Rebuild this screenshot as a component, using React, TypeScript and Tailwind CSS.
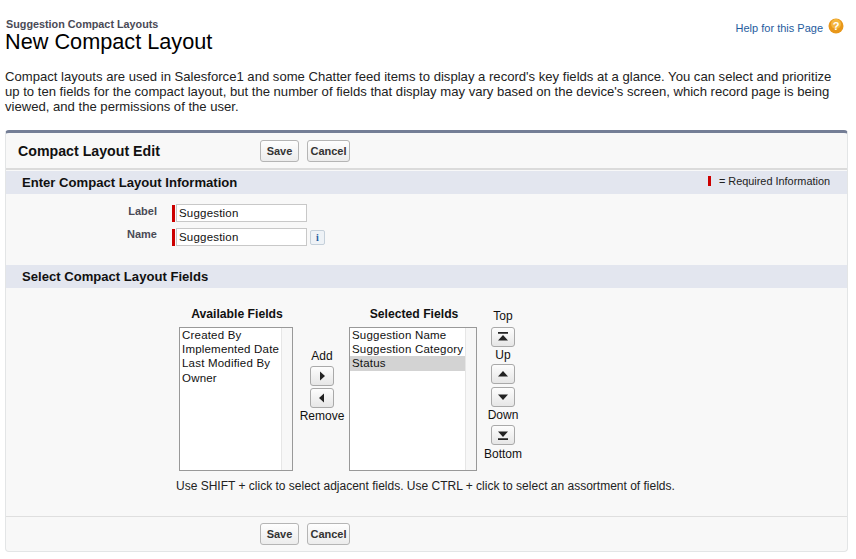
const FONT = "font-['Liberation_Sans',Arial,sans-serif]";

function PushButton({
  className = "",
  children,
}: {
  readonly className?: string;
  readonly children: React.ReactNode;
}): React.JSX.Element {
  return (
    <button
      type="button"
      className={`flex h-[20px] w-[24px] items-center justify-center rounded-[3px] border border-[#a9a9a9] bg-gradient-to-b from-[#fdfdfd] to-[#e6e6e6] ${className}`}
    >
      <svg width="14" height="12" viewBox="0 0 14 12" fill="#222">
        {children}
      </svg>
    </button>
  );
}

function ActionButtons(): React.JSX.Element {
  const cls =
    "h-[22px] rounded-[3px] border border-[#b5b5b5] bg-gradient-to-b from-[#fefefe] to-[#ececec] text-[11px] leading-none font-bold text-[#333]";
  return (
    <div className="flex gap-[8px]">
      <button type="button" className={`${cls} w-[39px]`}>
        Save
      </button>
      <button type="button" className={`${cls} w-[43px]`}>
        Cancel
      </button>
    </div>
  );
}

function SectionBar({
  title,
  trailing,
}: {
  readonly title: string;
  readonly trailing?: React.ReactNode;
}): React.JSX.Element {
  return (
    <div className="flex h-[23px] items-center justify-between bg-[#e3e6ef] pr-[17px] pl-[16px]">
      <h3 className="text-[13.1px] font-bold text-[#111]">{title}</h3>
      {trailing}
    </div>
  );
}

function FormRow({
  label,
  labelClass,
  trailing,
}: {
  readonly label: string;
  readonly labelClass: string;
  readonly trailing?: React.ReactNode;
}): React.JSX.Element {
  return (
    <div className="flex h-[24px] items-start">
      <label className={`w-[151px] text-right text-[11px] leading-[14px] font-bold text-[#4a4a56] ${labelClass}`}>
        {label}
      </label>
      <span className="mt-[1px] ml-[15px] h-[17px] w-[3px] bg-[#c00]" />
      <input
        readOnly
        value="Suggestion"
        className="ml-[1px] h-[18px] w-[131px] border border-[#c8c8c8] bg-white pl-[2px] text-[11.5px] tracking-[0.2px] text-[#111] outline-none"
      />
      {trailing}
    </div>
  );
}

function ListBox({
  title,
  items,
  selected,
  width,
}: {
  readonly title: string;
  readonly items: readonly string[];
  readonly selected?: string;
  readonly width: string;
}): React.JSX.Element {
  return (
    <div className={width}>
      <div className="h-[20px] pl-[2px] text-center text-[12.2px] leading-[14px] font-bold text-[#111]">{title}</div>
      <div className="flex h-[144px] border border-[#999] bg-white">
        <ul className="min-w-0 flex-1 text-[11.5px] leading-[14.2px] tracking-[0.2px] text-[#111]">
          {items.map((item) => (
            <li key={item} className={`pl-[2px] whitespace-nowrap ${item === selected ? "bg-[#d3d3d3]" : ""}`}>
              {item}
            </li>
          ))}
        </ul>
        <div className="w-[11px] border-l border-[#e6e6e6] bg-[#f7f7f7]" />
      </div>
    </div>
  );
}

function SmallLabel({
  className = "",
  children,
}: {
  readonly className?: string;
  readonly children: React.ReactNode;
}): React.JSX.Element {
  return (
    <div className={`text-center text-[12px] leading-[14px] whitespace-nowrap text-[#111] ${className}`}>
      {children}
    </div>
  );
}

export default function App(): React.JSX.Element {
  return (
    <div className={`${FONT} h-[559px] w-[856px] overflow-hidden bg-white px-[5px] pt-[18px] text-black`}>
      <div className="flex items-start justify-between pr-[7px]">
        <div>
          <div className="ml-[1px] text-[10.8px] leading-[12px] font-bold text-[#4a4a56]">
            Suggestion Compact Layouts
          </div>
          <h1 className="text-[21.7px] leading-[23px] text-black">New Compact Layout</h1>
        </div>
        <div className="flex items-center gap-[5px]">
          <a className="text-[11px] leading-[20px] text-[#1f5c9e]">Help for this Page</a>
          <svg width="16" height="16" viewBox="0 0 16 16" className="mb-[4px]">
            <circle cx="8" cy="8" r="7.5" fill="#e8971a" />
            <circle cx="8" cy="6" r="5" fill="#f4b73f" />
            <text x="8" y="12" textAnchor="middle" fontSize="11" fontWeight="700" fill="#fff">
              ?
            </text>
          </svg>
        </div>
      </div>

      <p className="mt-[16px] w-[840px] text-[13.1px] leading-[15px] text-[#222]">
        Compact layouts are used in Salesforce1 and some Chatter feed items to display a record's key fields at a
        glance. You can select and prioritize up to ten fields for the compact layout, but the number of fields that
        display may vary based on the device's screen, which record page is being viewed, and the permissions of the
        user.
      </p>

      <section className="mt-[16px] w-[843px] rounded-[4px] border border-t-[3px] border-[#e3e5e6] border-t-[#747e96] bg-[#f8f8f8]">
        <div className="flex h-[37px] items-center border-b-[2px] border-[#dbdbdb] pt-[1px]">
          <h2 className="w-[254px] pt-[1px] pl-[12px] text-[14.2px] font-bold text-[#111]">Compact Layout Edit</h2>
          <ActionButtons />
        </div>
        <div className="mt-[1px]">
          <SectionBar
            title="Enter Compact Layout Information"
            trailing={
              <span className="mb-[2px] flex items-center text-[10.9px] text-[#222]">
                <span className="mr-[8px] h-[10px] w-[3px] bg-[#c00]" />= Required Information
              </span>
            }
          />
        </div>
        <div className="h-[71px] pt-[10px]">
          <FormRow label="Label" labelClass="pt-[0px]" />
          <FormRow
            label="Name"
            labelClass="-mt-[1px]"
            trailing={
              <span className="mt-[2px] ml-[3px] flex h-[15px] w-[15px] items-center justify-center rounded-[2px] border border-[#c5d0da] bg-[#eef2f6] font-['Liberation_Serif',serif] text-[10px] font-bold text-[#1f5c9e]">
                i
              </span>
            }
          />
        </div>
        <SectionBar title="Select Compact Layout Fields" />

        <div className="flex h-[228px] flex-col pt-[19px]">
          <div className="flex items-start">
            <div className="ml-[173px]">
              <ListBox
                title="Available Fields"
                items={["Created By", "Implemented Date", "Last Modified By", "Owner"]}
                width="w-[114px]"
              />
            </div>
            <div className="flex w-[56px] flex-col items-center pt-[42px] pl-[2px]">
              <SmallLabel>Add</SmallLabel>
              <PushButton className="mt-[3px]">
                <path d="M5 1.5 10 6l-5 4.5z" />
              </PushButton>
              <PushButton className="mt-[2px]">
                <path d="M9 1.5 4 6l5 4.5z" />
              </PushButton>
              <SmallLabel className="mt-[1px]">Remove</SmallLabel>
            </div>
            <ListBox
              title="Selected Fields"
              items={["Suggestion Name", "Suggestion Category", "Status"]}
              selected="Status"
              width="w-[128px]"
            />
            <div className="ml-[14px] flex w-[24px] flex-col items-center pt-[2px]">
              <SmallLabel>Top</SmallLabel>
              <PushButton className="mt-[4px]">
                <path d="M2 1h10v1.8H2zM7 4l5 5.5H2z" />
              </PushButton>
              <SmallLabel className="mt-[1px]">Up</SmallLabel>
              <PushButton className="mt-[2px]">
                <path d="M7 3l5 5.5H2z" />
              </PushButton>
              <PushButton className="mt-[3px]">
                <path d="M7 9 2 3.5h10z" />
              </PushButton>
              <SmallLabel className="mt-[1px]">Down</SmallLabel>
              <PushButton className="mt-[3px]">
                <path d="M2 9.2h10V11H2zM7 8 2 2.5h10z" />
              </PushButton>
              <SmallLabel className="mt-[2px]">Bottom</SmallLabel>
            </div>
          </div>
          <p className="mt-[8px] pl-[170px] text-[12px] leading-[15px] text-[#222]">
            Use SHIFT + click to select adjacent fields. Use CTRL + click to select an assortment of fields.
          </p>
        </div>

        <div className="flex h-[35px] items-center border-t border-[#dfdfdf] pl-[254px]">
          <ActionButtons />
        </div>
      </section>
    </div>
  );
}
